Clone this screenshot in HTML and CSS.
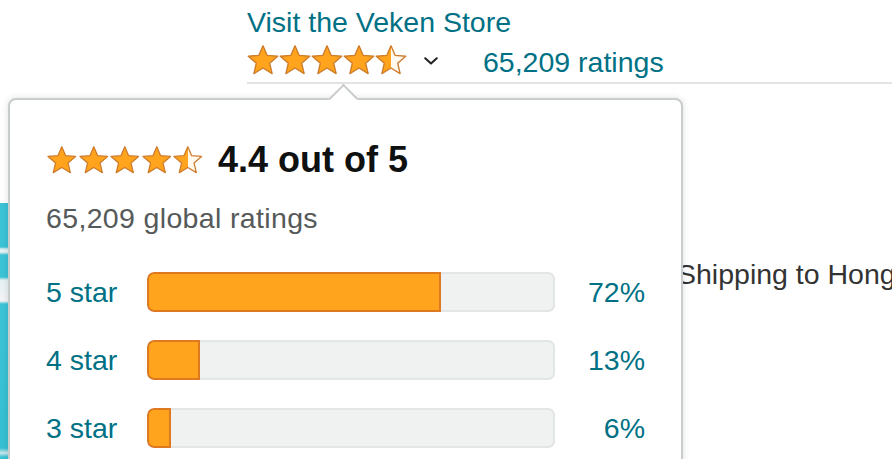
FILE: index.html
```html
<!DOCTYPE html>
<html lang="en">
<head>
<meta charset="utf-8">
<title>Veken ratings</title>
<link rel="stylesheet" href="styles.css">
</head>
<body>
<div class="page">
  <aside class="gallery">
    <div class="thumb-strip"></div>
  </aside>

  <main class="center">
    <a class="store-link" href="#">Visit the Veken Store</a>
    <div class="rating-row">
      <span class="stars stars-top" aria-label="4.5 out of 5 stars">
        <svg class="star" viewBox="0 0 32 30"><path class="star-full" d="M16 0.8 L20.11 10.34 L30.74 11.21 L22.66 18.16 L25.11 28.54 L16 23 L6.89 28.54 L9.34 18.16 L1.26 11.21 L11.89 10.34 Z"/></svg>
        <svg class="star" viewBox="0 0 32 30"><path class="star-full" d="M16 0.8 L20.11 10.34 L30.74 11.21 L22.66 18.16 L25.11 28.54 L16 23 L6.89 28.54 L9.34 18.16 L1.26 11.21 L11.89 10.34 Z"/></svg>
        <svg class="star" viewBox="0 0 32 30"><path class="star-full" d="M16 0.8 L20.11 10.34 L30.74 11.21 L22.66 18.16 L25.11 28.54 L16 23 L6.89 28.54 L9.34 18.16 L1.26 11.21 L11.89 10.34 Z"/></svg>
        <svg class="star" viewBox="0 0 32 30"><path class="star-full" d="M16 0.8 L20.11 10.34 L30.74 11.21 L22.66 18.16 L25.11 28.54 L16 23 L6.89 28.54 L9.34 18.16 L1.26 11.21 L11.89 10.34 Z"/></svg>
        <svg class="star" viewBox="0 0 32 30"><defs><linearGradient id="halfTop"><stop offset="50%" stop-color="#FFA41C"/><stop offset="50%" stop-color="#FFF9EE"/></linearGradient></defs><path class="star-part" fill="url(#halfTop)" d="M16 0.8 L20.11 10.34 L30.74 11.21 L22.66 18.16 L25.11 28.54 L16 23 L6.89 28.54 L9.34 18.16 L1.26 11.21 L11.89 10.34 Z"/></svg>
      </span>
      <svg class="chevron" viewBox="0 0 14 8"><polyline points="1.2,1.2 7,6.6 12.8,1.2"/></svg>
      <a class="ratings-link" href="#">65,209 ratings</a>
    </div>
    <div class="divider"></div>
    <div class="center-body">
      <p class="shipping">Shipping to Hong Kong</p>
    </div>
  </main>

  <section class="popover">
    <span class="popover-arrow"></span>
    <div class="summary">
      <span class="stars stars-head" aria-label="4.4 out of 5 stars">
        <svg class="star" viewBox="0 0 32 30"><path class="star-full" d="M16 0.8 L20.11 10.34 L30.74 11.21 L22.66 18.16 L25.11 28.54 L16 23 L6.89 28.54 L9.34 18.16 L1.26 11.21 L11.89 10.34 Z"/></svg>
        <svg class="star" viewBox="0 0 32 30"><path class="star-full" d="M16 0.8 L20.11 10.34 L30.74 11.21 L22.66 18.16 L25.11 28.54 L16 23 L6.89 28.54 L9.34 18.16 L1.26 11.21 L11.89 10.34 Z"/></svg>
        <svg class="star" viewBox="0 0 32 30"><path class="star-full" d="M16 0.8 L20.11 10.34 L30.74 11.21 L22.66 18.16 L25.11 28.54 L16 23 L6.89 28.54 L9.34 18.16 L1.26 11.21 L11.89 10.34 Z"/></svg>
        <svg class="star" viewBox="0 0 32 30"><path class="star-full" d="M16 0.8 L20.11 10.34 L30.74 11.21 L22.66 18.16 L25.11 28.54 L16 23 L6.89 28.54 L9.34 18.16 L1.26 11.21 L11.89 10.34 Z"/></svg>
        <svg class="star" viewBox="0 0 32 30"><defs><linearGradient id="halfHead"><stop offset="50%" stop-color="#FFA41C"/><stop offset="50%" stop-color="#FFF9EE"/></linearGradient></defs><path class="star-part" fill="url(#halfHead)" d="M16 0.8 L20.11 10.34 L30.74 11.21 L22.66 18.16 L25.11 28.54 L16 23 L6.89 28.54 L9.34 18.16 L1.26 11.21 L11.89 10.34 Z"/></svg>
      </span>
      <span class="summary-text">4.4 out of 5</span>
    </div>
    <p class="global">65,209 global ratings</p>
    <div class="histogram">
      <a class="hist-label" href="#">5 star</a>
      <div class="meter"><div class="meter-bar" style="width:72%"></div></div>
      <a class="hist-pct" href="#">72%</a>

      <a class="hist-label" href="#">4 star</a>
      <div class="meter"><div class="meter-bar" style="width:13%"></div></div>
      <a class="hist-pct" href="#">13%</a>

      <a class="hist-label" href="#">3 star</a>
      <div class="meter"><div class="meter-bar" style="width:6%"></div></div>
      <a class="hist-pct" href="#">6%</a>
    </div>
  </section>
</div>
</body>
</html>
```
FILE: styles.css
```css
* { box-sizing: border-box; }

html, body {
  margin: 0;
  padding: 0;
  background: #fff;
}

body {
  font-family: "Liberation Sans", Arial, sans-serif;
  font-size: 28.5px;
  line-height: 40px;
  color: #0F1111;
}

a { text-decoration: none; color: #007185; }
p { margin: 0; }

.page {
  position: relative;
  width: 892px;
  height: 459px;
  overflow: hidden;
  display: flex;
  padding-top: 2px;
}

/* left product gallery (mostly hidden under popover) */
.gallery {
  width: 247px;
  flex: none;
}

.thumb-strip {
  width: 8px;
  height: 260px;
  margin-top: 201px;
  background:
    linear-gradient(to bottom,
      #3cc3d6 0px, #3cc3d6 44px,
      #d8eef2 46px, #eaf4f6 49px, #3cc3d6 52px,
      #3cc3d6 74px, #e6f1f4 77px, #f4f4f6 98px, #3cc3d6 101px,
      #35bfd3 245px, #cfe9ee 250px, #3cc3d6 254px);
}

/* center column */
.center {
  flex: 1;
  min-width: 0;
  display: flex;
  flex-direction: column;
}

.store-link {
  display: block;
  white-space: nowrap;
}

.rating-row {
  display: flex;
  align-items: center;
  height: 40px;
}

.stars {
  display: flex;
  flex: none;
}

.stars-top { margin-top: -4px; }
.stars-top .star { width: 32px; height: 30px; }

.star { display: block; }

.star-full {
  fill: #FFA41C;
  stroke: #CF7C2C;
  stroke-width: 1.4;
  stroke-linejoin: round;
}

.star-part {
  stroke: #CF7C2C;
  stroke-width: 1.4;
  stroke-linejoin: round;
}

.chevron {
  width: 14px;
  height: 8px;
  margin-left: 17px;
  margin-top: -2px;
  fill: none;
  stroke: #222;
  stroke-width: 2;
  stroke-linecap: round;
  stroke-linejoin: round;
}

.ratings-link {
  margin-left: 45px;
  white-space: nowrap;
}

.divider {
  height: 2px;
  background: #e3e3e3;
}

.center-body {
  padding-top: 170px;
  padding-left: 430px;
}

.shipping {
  color: #333;
  white-space: nowrap;
}

/* ratings popover */
.popover {
  position: absolute;
  left: 8px;
  top: 98px;
  width: 675px;
  height: 420px;
  background: #fff;
  border: 2px solid #c9cccc;
  border-radius: 8px;
  box-shadow: 0 0 7px rgba(0, 0, 0, 0.13);
  padding: 36px 36px 0 36px;
}

.popover-arrow {
  position: absolute;
  left: 323px;
  top: -12px;
  width: 21px;
  height: 21px;
  background: #fff;
  border-top: 2px solid #c9cccc;
  border-left: 2px solid #c9cccc;
  transform: rotate(45deg);
}

.summary {
  display: flex;
  align-items: center;
  height: 48px;
  gap: 14px;
}

.stars-head .star { width: 31.6px; height: 28px; }

.summary-text {
  font-size: 36px;
  font-weight: bold;
  line-height: 48px;
  white-space: nowrap;
}

.global {
  margin-top: 14px;
  color: #565959;
  letter-spacing: 0.35px;
}

.histogram {
  margin-top: 34px;
  display: grid;
  grid-template-columns: 101px 408px 90px;
  grid-auto-rows: 40px;
  row-gap: 28px;
  align-items: center;
}

.hist-label { white-space: nowrap; }

.hist-pct {
  text-align: right;
  white-space: nowrap;
}

.meter {
  height: 40px;
  background: #F0F2F2;
  border-radius: 7px;
  box-shadow: inset 0 0 0 2px #E3E6E6;
  overflow: hidden;
}

.meter-bar {
  height: 100%;
  background: #FFA41C;
  border: 2px solid #DE7921;
  border-radius: 7px 0 0 7px;
}
```
